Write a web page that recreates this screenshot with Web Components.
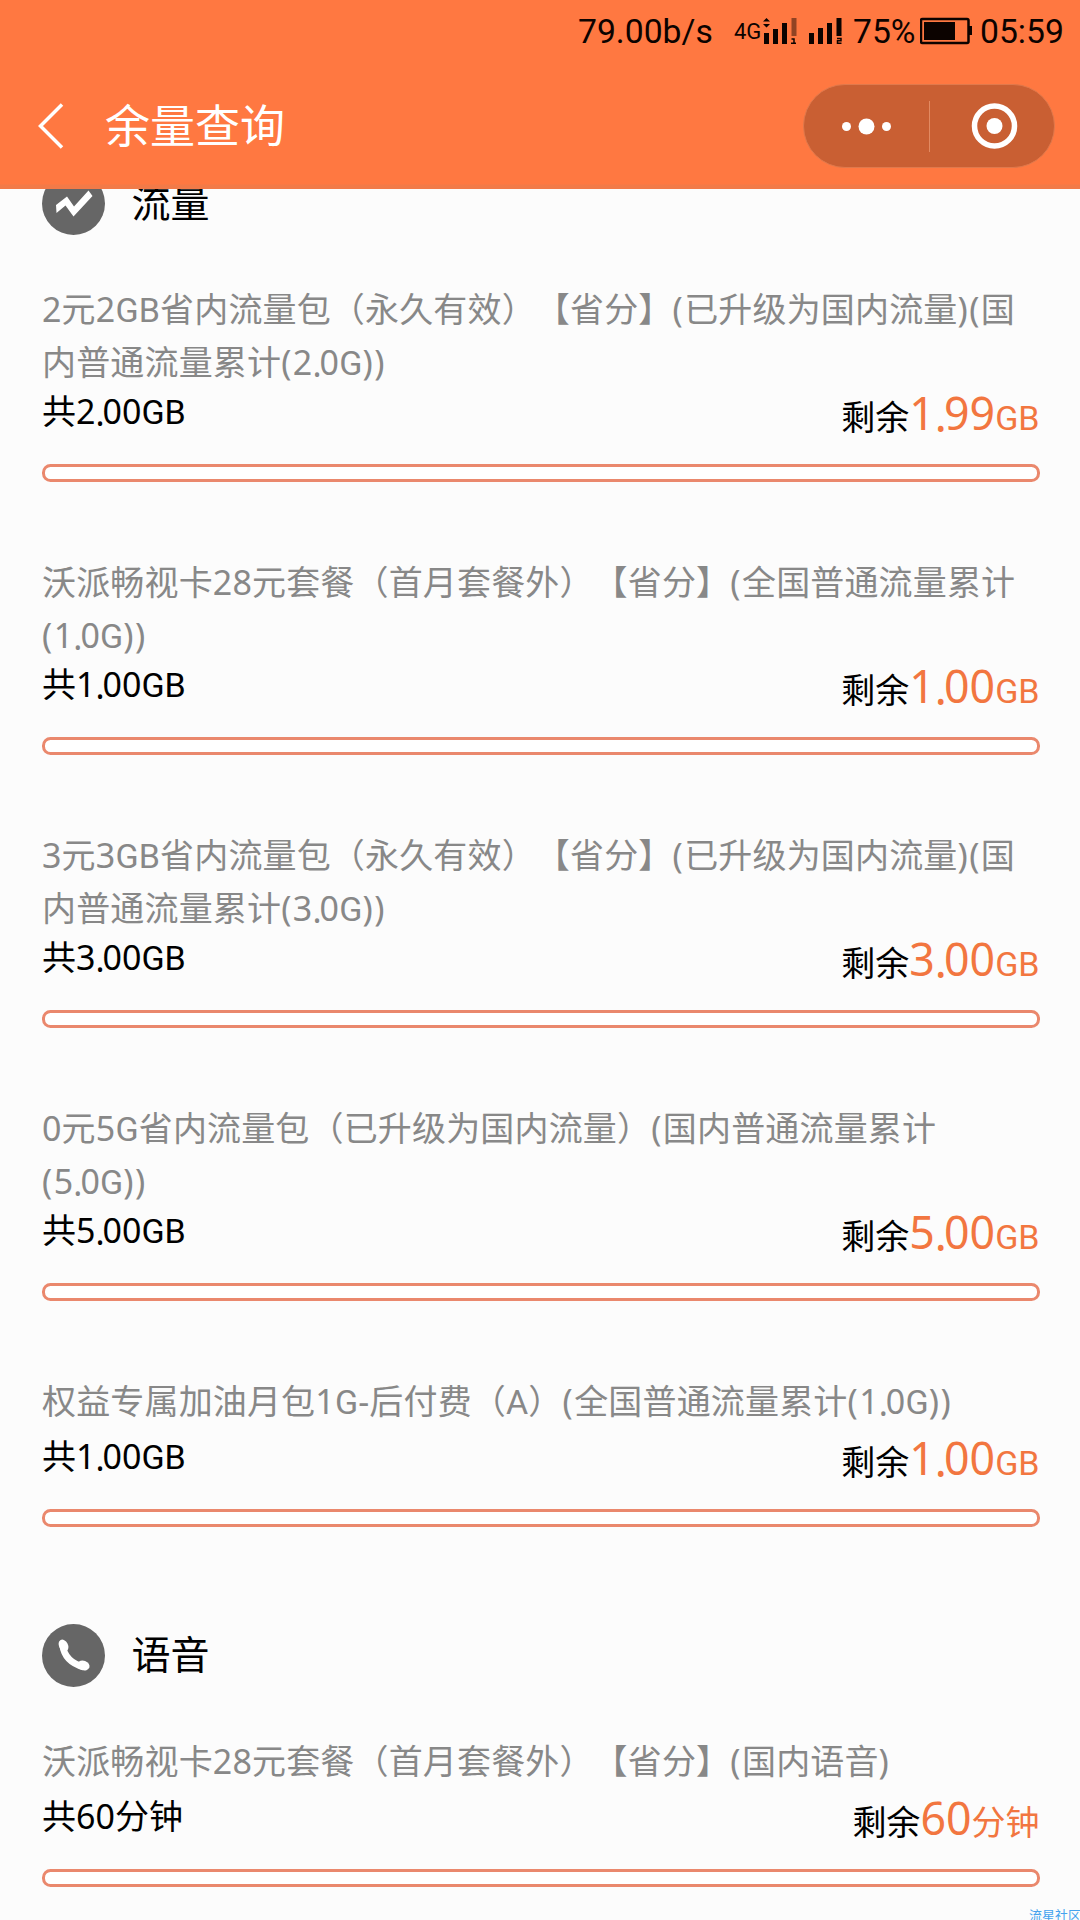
<!DOCTYPE html>
<html lang="zh-CN">
<head>
<meta charset="utf-8">
<title>余量查询</title>
<style>
html,body{margin:0;padding:0;background:#fcfcfc}
body{font-family:"Noto Sans","Noto Sans CJK SC",sans-serif;width:1080px;height:1920px;overflow:hidden;text-spacing-trim:space-all}
</style>
</head>
<body>
<balance-app></balance-app>
<script>
// Splits mixed text so that letters use Roboto and periods sit slightly low.
const mix = s => s.replace(/[A-Za-z]+|\.|[()]+/g, m => m === '.' ? '<i>.</i>' : /[()]/.test(m) ? `<u>${m}</u>` : `<b>${m}</b>`);
const mixCss = `b{font-family:Roboto,sans-serif;font-weight:400}i{font-style:normal;vertical-align:-.05em;line-height:0;letter-spacing:-.06em}u{text-decoration:none;letter-spacing:1.500px}`;
const define = (name, render) => customElements.define(name, class extends HTMLElement {
  connectedCallback(){ if(!this.shadowRoot) this.attachShadow({mode:'open'}).innerHTML = render(this); }
});

define('status-bar', () => `<style>
:host{display:flex;height:62px;padding-left:578px;color:#0c0300;font:33.700px/63px Roboto,sans-serif;white-space:nowrap}
span{flex:none}svg{flex:none;display:block}
.rate{width:156px}.net{width:28px;font-size:22px;line-height:64px}.pct{width:67px}
</style><span class="rate">79.00b/s</span><span class="net">4G</span>
<svg width="91" height="62" viewBox="762 0 91 62" fill="#0c0300">
<path d="M763 21.500l3.500-3.500 3.500 3.500zM763 24l3.500 3.500 3.500-3.500z"/>
<path d="M764 33h5v11h-5zM773 29h5v15h-5zM782 23h5v21h-5zM809 33h5v11h-5zM818 28h5v16h-5zM827 23h5v21h-5zM836.500 18h5v18h-5z"/>
<path d="M791.500 18h5v18h-5z" opacity=".45"/>
<path d="M791.500 39h2.500v4M791 43.300h5M837 38.500h4v2.300h-3.500v2.500h4" fill="none" stroke="#0c0300" stroke-width="1.500"/></svg>
<span class="pct">75%</span>
<svg width="60" height="62" viewBox="920 0 60 62"><rect x="921" y="19" width="47.500" height="24" rx="1.500" fill="none" stroke="#0c0300" stroke-width="2.500"/><path d="M924 22h31v18h-31zM969 26h3v9h-3z" fill="#0c0300"/></svg>
<span>05:59</span>`);

define('capsule-menu', () => `<style>
:host{display:block;box-sizing:border-box;width:252px;height:84px;border-radius:42px;background:#c95f33;border:1px solid #e0794c}
svg{display:block;margin:-1px}</style>
<svg width="252" height="84" viewBox="803 84 252 84" fill="#fff"><circle cx="846.500" cy="126.500" r="4.500"/><circle cx="866.500" cy="126.500" r="8"/><circle cx="886.500" cy="126.500" r="4.500"/><path d="M929 101h1v51h-1z" fill="#e28a62"/><circle cx="994.500" cy="126" r="20" fill="none" stroke="#fff" stroke-width="5.500"/><circle cx="994.500" cy="126" r="8"/></svg>`);

define('nav-bar', () => `<style>
:host{display:flex;align-items:center;height:127px;padding:0 25px 0 36px;box-sizing:border-box}
svg{display:block;width:30px;height:50px;margin-right:39px}
h1{margin:0;flex:1;font-size:45px;font-weight:400;line-height:60px;color:#fff}
</style><svg viewBox="36 101 30 50"><path d="M62 104.500L40.500 126 62 147.500" fill="none" stroke="#fff" stroke-width="3.500"/></svg><h1><slot></slot></h1><capsule-menu></capsule-menu>`);

define('section-head', el => `<style>
:host{display:flex;align-items:center;height:63px;gap:26.500px;font-size:39px;line-height:59px;color:#000}
svg{display:block}span{height:63px}</style>
<svg width="63" height="63" viewBox="0 0 63 63"><circle cx="31.500" cy="31.500" r="31.500" fill="#666"/>${
el.getAttribute('icon')==='data'
? '<path d="M14 33L25 24.500 32 34.500 46.500 18.500 50.500 24 31.500 44.500 23.500 33.500 14.500 41z" fill="#fff"/>'
: '<path d="M20.500 21C22 32 29 39.500 41.500 43" fill="none" stroke="#fff" stroke-width="6.500"/><ellipse cx="21.500" cy="21.500" rx="4.500" ry="6.200" transform="rotate(-28 21.500 21.500)" fill="#fff"/><ellipse cx="41.500" cy="41.500" rx="6.200" ry="4.800" transform="rotate(20 41.500 41.500)" fill="#fff"/>'
}</svg><span><slot></slot></span>`);

define('usage-item', el => {
  const a = n => el.getAttribute(n);
  return `<style>${mixCss}
:host{display:block;margin-bottom:73px}
.title{font-size:34px;line-height:55px;color:#888;white-space:nowrap;letter-spacing:.16px}
.title div{height:53px}
.one{padding-bottom:6px}
.row{display:flex;justify-content:space-between;height:76px;color:#000;font-size:34px;white-space:nowrap}
.total{line-height:46px}
.left{line-height:49px}
.left em{font-style:normal;color:#f27640}.left strong{font-weight:400;font-size:44.700px}
.bar{height:18px;box-sizing:border-box;border:3px solid #ea886d;border-radius:8.500px;background:#fff}
</style><div class="title ${a('l2')?'':'one'}"><div>${mix(a('l1'))}</div>${a('l2')?`<div>${mix(a('l2'))}</div>`:''}</div>
<div class="row"><span class="total">共${mix(a('total')+a('unit'))}</span><span class="left">剩余<em><strong>${mix(a('left'))}</strong>${mix(a('unit'))}</em></span></div><div class="bar"></div>`;
});

define('water-mark', () => `<style>:host{position:absolute;left:1029px;top:1905px;width:51px;height:15px;overflow:hidden;white-space:nowrap;font:13px/19px "Noto Sans CJK SC",sans-serif;color:#45a2ee}</style><slot></slot>`);

define('balance-app', () => `<style>
:host{display:flex;flex-direction:column;height:1920px;background:#fcfcfc}
header{height:189px;flex:none;background:linear-gradient(#ff7841 0 184px,#f27a48 185px)}
main{flex:1;overflow:hidden;padding:0 40.500px 0 42px}
section-head{margin-bottom:47px}
.first{margin-top:-17px}.next{margin-top:97px}
</style>
<header><status-bar></status-bar><nav-bar>余量查询</nav-bar></header>
<main><section-head class="first" icon="data">流量</section-head>
<usage-item l1="2元2GB省内流量包（永久有效）【省分】(已升级为国内流量)(国" l2="内普通流量累计(2.0G))" total="2.00" left="1.99" unit="GB"></usage-item>
<usage-item l1="沃派畅视卡28元套餐（首月套餐外）【省分】(全国普通流量累计" l2="(1.0G))" total="1.00" left="1.00" unit="GB"></usage-item>
<usage-item l1="3元3GB省内流量包（永久有效）【省分】(已升级为国内流量)(国" l2="内普通流量累计(3.0G))" total="3.00" left="3.00" unit="GB"></usage-item>
<usage-item l1="0元5G省内流量包（已升级为国内流量）(国内普通流量累计" l2="(5.0G))" total="5.00" left="5.00" unit="GB"></usage-item>
<usage-item l1="权益专属加油月包1G-后付费（A）(全国普通流量累计(1.0G))" total="1.00" left="1.00" unit="GB"></usage-item>
<section-head class="next" icon="voice">语音</section-head>
<usage-item l1="沃派畅视卡28元套餐（首月套餐外）【省分】(国内语音)" total="60" left="60" unit="分钟"></usage-item>
</main><water-mark>流星社区</water-mark>`);
</script>
</body>
</html>
